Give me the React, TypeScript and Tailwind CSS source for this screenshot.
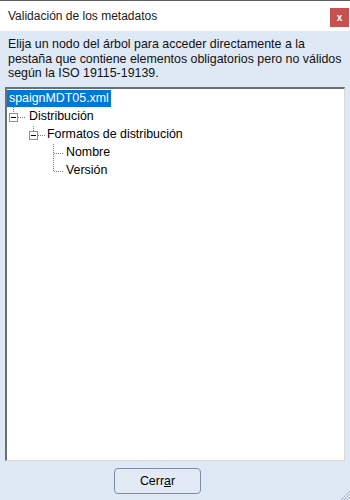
import React from "react";

// ── Tree rows ──────────────────────────────────────────────────────────────
const ROWS = [
  { label: "spaignMDT05.xml", pad: "pl-[2px]", selected: true },
  { label: "Distribución", pad: "pl-[22px]" },
  { label: "Formatos de distribución", pad: "pl-[40px]" },
  { label: "Nombre", pad: "pl-[59px]" },
  { label: "Versión", pad: "pl-[59px]" },
];

const FONT = { fontFamily: '"Liberation Sans", Arial, sans-serif' };

function MinusBox({ x, y }: { x: number; y: number }) {
  return (
    <g>
      <rect x={x + 0.5} y={y + 0.5} width={8} height={8} fill="#fff" stroke="#8f8f8f" />
      <line x1={x + 2} y1={y + 4.5} x2={x + 7} y2={y + 4.5} stroke="#000" />
    </g>
  );
}

function TreeLines() {
  const dot = { stroke: "#7f7f7f", strokeDasharray: "1 1", shapeRendering: "crispEdges" as const };
  return (
    <svg className="absolute left-0 top-0 pointer-events-none" width="200" height="100">
      {/* root -> Distribución */}
      <line x1={6.5} y1={18} x2={6.5} y2={24} {...dot} />
      <MinusBox x={2} y={24} />
      <line x1={11} y1={28.5} x2={19} y2={28.5} {...dot} />
      {/* Distribución -> Formatos */}
      <line x1={26.5} y1={37} x2={26.5} y2={42} {...dot} />
      <MinusBox x={22} y={42} />
      <line x1={31} y1={46.5} x2={38} y2={46.5} {...dot} />
      {/* Formatos -> leaves */}
      <line x1={46.5} y1={55} x2={46.5} y2={83} {...dot} />
      <line x1={47} y1={64.5} x2={57} y2={64.5} {...dot} />
      <line x1={47} y1={82.5} x2={57} y2={82.5} {...dot} />
    </svg>
  );
}

export default function App() {
  return (
    <div className="w-[350px] h-[500px] flex flex-col bg-[#dfe9f5] relative overflow-hidden text-black" style={FONT}>
      {/* ── Title bar ── */}
      <div className="h-[31px] bg-white border-t border-[#5f5f5f] flex items-center justify-between shrink-0">
        <span className="pl-[8px] text-[12px] text-[#1a1a1a]">Validación de los metadatos</span>
        <div className="w-[19px] h-[19px] bg-[#c75050] mr-[1px] mt-[3px] flex items-center justify-center">
          <span className="text-white text-[10px] font-bold leading-none">x</span>
        </div>
      </div>

      {/* ── Description ── */}
      <p className="pl-[8px] pt-[6px] text-[12.4px] leading-[14.5px] text-[#111] whitespace-nowrap">
        Elija un nodo del árbol para acceder directamente a la
        <br />
        pestaña que contiene elementos obligatorios pero no válidos
        <br />
        según la ISO 19115-19139.
      </p>

      {/* ── Tree ── */}
      <div className="mx-[5px] mt-[6px] h-[374px] shrink-0 bg-white border-t-2 border-l-2 border-[#6f6f6f] border-r border-b border-r-[#d9d9d9] border-b-[#d9d9d9]">
        <div className="relative pt-[1px]">
          <TreeLines />
          {ROWS.map((r) => (
            <div key={r.label} className={`h-[18px] flex items-center ${r.pad}`}>
              {r.selected ? (
                <span className="bg-[#0078d7] text-white text-[12.4px] h-[17px] leading-[17px] px-[2px] -ml-[2px]">
                  {r.label}
                </span>
              ) : (
                <span className="text-[12.4px] leading-[17px]">{r.label}</span>
              )}
            </div>
          ))}
        </div>
      </div>

      {/* ── Footer ── */}
      <div className="pt-[7px] pl-[114px]">
        <button className="w-[87px] h-[26px] rounded-[4px] border border-[#7d8ca3] bg-[#e2eaf6] text-[12.4px] text-black">
          Cerr<span className="underline">a</span>r
        </button>
      </div>

      {/* resize grip */}
      <svg className="absolute right-0 bottom-0" width="12" height="12">
        <line x1="12" y1="3" x2="3" y2="12" stroke="#a9b3c2" />
        <line x1="12" y1="6" x2="6" y2="12" stroke="#a9b3c2" />
        <line x1="12" y1="9" x2="9" y2="12" stroke="#a9b3c2" />
      </svg>
    </div>
  );
}
